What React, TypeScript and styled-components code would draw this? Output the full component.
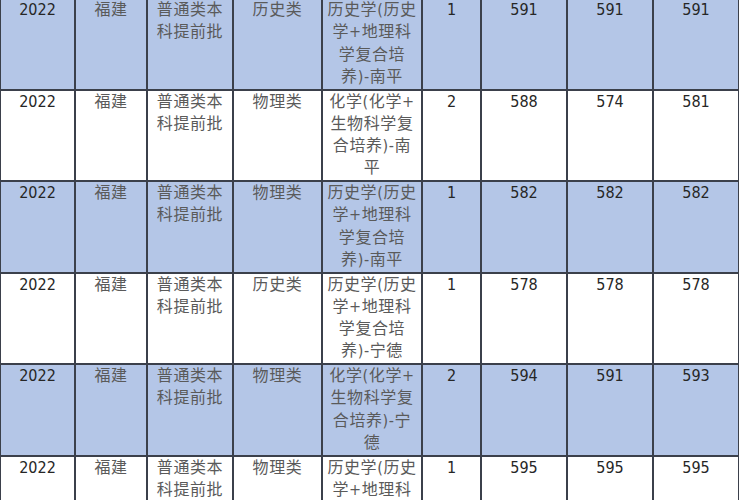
import styled, { createGlobalStyle } from 'styled-components';

const GlobalStyle = createGlobalStyle`
    html, body {
        margin: 0;
        padding: 0;
        background: #ffffff;
        overflow: hidden;
    }
`;

interface ScoreRow {
    year: string;
    province: string;
    batch: string[];
    category: string;
    major: string[];
    count: string;
    max: string;
    min: string;
    avg: string;
}

const rows: ScoreRow[] = [
    {
        year: '2022', province: '福建', batch: ['普通类本', '科提前批'], category: '历史类',
        major: ['历史学(历史', '学+地理科', '学复合培', '养)-南平'], count: '1', max: '591', min: '591', avg: '591',
    },
    {
        year: '2022', province: '福建', batch: ['普通类本', '科提前批'], category: '物理类',
        major: ['化学(化学+', '生物科学复', '合培养)-南', '平'], count: '2', max: '588', min: '574', avg: '581',
    },
    {
        year: '2022', province: '福建', batch: ['普通类本', '科提前批'], category: '物理类',
        major: ['历史学(历史', '学+地理科', '学复合培', '养)-南平'], count: '1', max: '582', min: '582', avg: '582',
    },
    {
        year: '2022', province: '福建', batch: ['普通类本', '科提前批'], category: '历史类',
        major: ['历史学(历史', '学+地理科', '学复合培', '养)-宁德'], count: '1', max: '578', min: '578', avg: '578',
    },
    {
        year: '2022', province: '福建', batch: ['普通类本', '科提前批'], category: '物理类',
        major: ['化学(化学+', '生物科学复', '合培养)-宁', '德'], count: '2', max: '594', min: '591', avg: '593',
    },
    {
        year: '2022', province: '福建', batch: ['普通类本', '科提前批'], category: '物理类',
        major: ['历史学(历史', '学+地理科', '学复合培', '养)-福州'], count: '1', max: '595', min: '595', avg: '595',
    },
];

const columnWidths = [75, 72, 86, 89, 100, 59, 86, 86, 86];

const Frame = styled.div`
    margin: -3px 0 0 -1px;
`;

const Table = styled.table`
    border-collapse: collapse;
    table-layout: fixed;
    width: 739px;
    font-family: "DejaVu Sans Condensed", "DejaVu Sans", "Noto Sans CJK SC", sans-serif;
    font-stretch: condensed;
    font-size: 16px;
`;

const Row = styled.tr<{ $shaded: boolean }>`
    height: 91.5px;
    background: ${props => props.$shaded ? '#b4c6e7' : '#ffffff'};
`;

const Cell = styled.td<{ $muted?: boolean }>`
    padding: 0 2px;
    border: 2px solid #3b404b;
    vertical-align: top;
    text-align: center;
    white-space: nowrap;
    overflow: hidden;
    color: ${props => props.$muted ? '#5a5a5a' : '#262626'};
    letter-spacing: ${props => props.$muted ? '0.6px' : '0'};
`;

const Line = styled.div`
    height: 22.3px;
    line-height: 22.3px;
    overflow: visible;
`;

function Lines(props: { lines: string[] }) {
    return <>{props.lines.map((line, i) => <Line key={i}>{line}</Line>)}</>;
}

export default function App() {
    return (
        <Frame>
            <GlobalStyle />
            <Table>
                <colgroup>
                    {columnWidths.map((w, i) => <col key={i} style={{ width: w }} />)}
                </colgroup>
                <tbody>
                    {rows.map((row, i) => (
                        <Row key={i} $shaded={i % 2 === 0}>
                            <Cell><Line>{row.year}</Line></Cell>
                            <Cell $muted><Line>{row.province}</Line></Cell>
                            <Cell $muted><Lines lines={row.batch} /></Cell>
                            <Cell $muted><Line>{row.category}</Line></Cell>
                            <Cell $muted><Lines lines={row.major} /></Cell>
                            <Cell><Line>{row.count}</Line></Cell>
                            <Cell><Line>{row.max}</Line></Cell>
                            <Cell><Line>{row.min}</Line></Cell>
                            <Cell><Line>{row.avg}</Line></Cell>
                        </Row>
                    ))}
                </tbody>
            </Table>
        </Frame>
    );
}
